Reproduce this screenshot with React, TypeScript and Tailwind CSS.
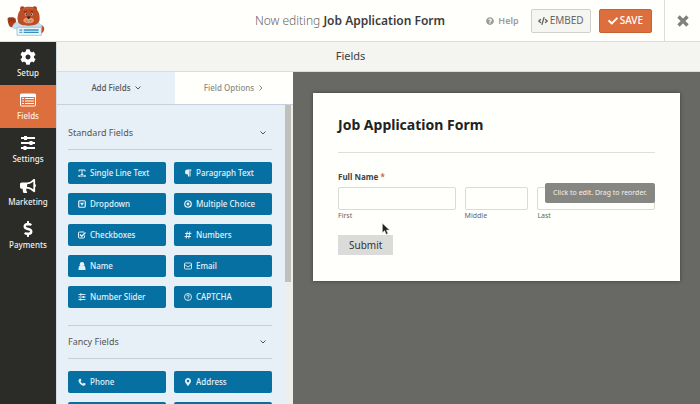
import type { ReactNode } from 'react';
import type { IconType } from 'react-icons';
import {
  FaBullhorn,
  FaCheck,
  FaCode,
  FaCog,
  FaDollarSign,
  FaHashtag,
  FaMapMarkerAlt,
  FaParagraph,
  FaQuestionCircle,
} from 'react-icons/fa';

type Field = { label: string; icon: IconType };

const standardFields: Field[] = [
  { label: 'Single Line Text', icon: TextCursorIcon },
  { label: 'Paragraph Text', icon: FaParagraph },
  { label: 'Dropdown', icon: DropdownIcon },
  { label: 'Multiple Choice', icon: RadioIcon },
  { label: 'Checkboxes', icon: CheckboxIcon },
  { label: 'Numbers', icon: FaHashtag },
  { label: 'Name', icon: PersonIcon },
  { label: 'Email', icon: EnvelopeIcon },
  { label: 'Number Slider', icon: SlidersIcon },
  { label: 'CAPTCHA', icon: QuestionIcon },
];

const fancyFields: Field[] = [
  { label: 'Phone', icon: PhoneIcon },
  { label: 'Address', icon: FaMapMarkerAlt },
];

const navItems: Field[] = [
  { label: 'Setup', icon: FaCog },
  { label: 'Fields', icon: ListIcon },
  { label: 'Settings', icon: SlidersIcon },
  { label: 'Marketing', icon: FaBullhorn },
  { label: 'Payments', icon: FaDollarSign },
];

export default function App() {
  return (
    <div className="flex h-screen flex-col overflow-hidden bg-[#fffffc] font-['Noto_Sans',sans-serif] text-[#3f3f3f]">
      <Header />
      <div className="flex min-h-0 flex-1">
        <nav className="w-14 shrink-0 bg-[#2b2b27]">
          {navItems.map(({ label, icon: Icon }) => (
            <a
              key={label}
              href="#"
              className={
                label === 'Fields'
                  ? 'flex h-[43px] flex-col items-center justify-center gap-0.5 bg-[#dd6e3d] text-[8px] leading-3 font-medium text-[#fdeee6]'
                  : 'flex h-[43px] flex-col items-center justify-center gap-0.5 text-[8px] leading-3 font-medium text-[#f0f0ec]'
              }
            >
              <Icon size={16} className="text-white" />
              {label}
            </a>
          ))}
        </nav>
        <div className="flex min-w-0 flex-1 flex-col border-l border-[#d3dbe2]">
          <div className="flex h-[30px] shrink-0 items-center justify-center border-b border-[#dcddd9] bg-[#f4f4f1] pr-14 text-[11px]">
            Fields
          </div>
          <div className="flex min-h-0 flex-1">
            <FieldsPanel />
            <main className="min-w-0 flex-1 bg-[#686964] px-5 py-[21px]">
              <Preview />
            </main>
          </div>
        </div>
      </div>
    </div>
  );
}

function Header() {
  return (
    <header className="grid h-[42px] shrink-0 grid-cols-[1fr_auto_1fr] items-center border-b border-[#dcddd9]">
      <Logo />
      <p className="text-xs font-light text-[#666]">
        Now editing <strong className="font-semibold text-[#3b3b3b]">Job Application Form</strong>
      </p>
      <div className="flex h-full items-center justify-end">
        <a href="#" className="mr-3 flex items-center gap-1 text-[9px] font-semibold text-[#9b9b99]">
          <FaQuestionCircle size={8} />
          Help
        </a>
        <button className="mr-2 flex h-6 items-center gap-0.5 rounded-xs border border-[#d0d1cf] bg-[#f5f5f2] px-1.5 text-[10px] text-[#666]">
          <FaCode size={10} />
          EMBED
        </button>
        <button className="flex h-6 items-center gap-0.5 rounded-xs border border-[#c9602f] bg-[#dd6e3d] px-2 text-[10px] font-medium text-white">
          <FaCheck size={10} />
          SAVE
        </button>
        <button aria-label="Close" className="ml-3 flex h-full w-9 items-center justify-center border-l border-[#dcddd9] text-[#80807d]">
          <svg width="12" height="12" viewBox="0 0 12 12" fill="none" stroke="currentColor" strokeWidth="3.4">
            <path d="M1.5 1.5 10.5 10.5M10.5 1.5 1.5 10.5" />
          </svg>
        </button>
      </div>
    </header>
  );
}

function FieldsPanel() {
  return (
    <aside className="flex w-[236px] shrink-0 flex-col bg-[#e8f0f7]">
      <div className="grid h-[33px] shrink-0 grid-cols-2 border-b border-[#c5d1dc] text-[8px]">
        <button className="flex items-center justify-center gap-1 font-medium text-[#555]">
          Add Fields
          <Chevron />
        </button>
        <button className="flex items-center justify-center gap-1 bg-[#fffffc] font-medium text-[#8b8b89]">
          Field Options
          <span className="-rotate-90">
            <Chevron />
          </span>
        </button>
      </div>
      <div className="flex min-h-0 flex-1">
        <div className="min-w-0 flex-1 overflow-hidden pr-[13px] pl-[11px]">
          <FieldGroup title="Standard Fields" fields={standardFields}>
            <div className="h-3" />
          </FieldGroup>
          <FieldGroup title="Fancy Fields" fields={fancyFields}>
            <div className="mt-[17px] border-t border-[#c5d1d9]" />
          </FieldGroup>
          <div className="mt-[9px] grid grid-cols-2 gap-x-2">
            <div className="h-[22px] rounded-xs bg-[#0770a3]" />
            <div className="h-[22px] rounded-xs bg-[#0770a3]" />
          </div>
        </div>
        <div className="w-2 bg-[#eeeeeb] pr-0.5">
          <div className="h-[177px] bg-[#bfbfbc]" />
        </div>
      </div>
    </aside>
  );
}

function FieldGroup({ title, fields, children }: { title: string; fields: Field[]; children: ReactNode }) {
  return (
    <section>
      {children}
      <h2>
        <button className="flex h-[33px] w-full items-center justify-between border-b border-[#c5d1d9] pr-1.5 text-[9px] text-[#555]">
          {title}
          <Chevron />
        </button>
      </h2>
      <div className="mt-3 grid grid-cols-2 gap-x-2 gap-y-[9px]">
        {fields.map(({ label, icon: Icon }) => (
          <button
            key={label}
            className="flex h-[22px] items-center gap-1 rounded-xs bg-[#0770a3] pl-2.5 text-[8px] font-medium text-[#e3f2f8]"
          >
            <Icon size={8} />
            {label}
          </button>
        ))}
      </div>
    </section>
  );
}

function Preview() {
  return (
    <form className="bg-[#fffffc] px-[25px] pt-5 pb-[26px] shadow-[0_0_4px_rgba(0,0,0,0.4)]">
      <h1 className="border-b border-[#dededa] pb-[15px] text-sm leading-6 font-bold text-[#222]">Job Application Form</h1>
      <fieldset className="mt-4">
        <legend className="text-[8px] leading-4 font-bold text-[#444]">
          Full Name <span className="text-[#d4623f]">*</span>
        </legend>
        <div className="relative mt-0.5 grid grid-cols-[118fr_64fr_118fr] gap-[9px]">
          <NameInput label="First" />
          <NameInput label="Middle" />
          <NameInput label="Last" />
          <div role="tooltip" className="absolute -top-1 right-0 rounded-xs bg-[#868682] px-2 text-[7px] leading-5 text-[#f2f2ef]">
            Click to edit. Drag to reorder.
          </div>
          <svg className="absolute top-9 left-11 h-3 w-2" viewBox="0 0 8 12">
            <path d="M.5.5v9l2.2-2 1.500 3.700 1.600-.7-1.500-3.500h3z" fill="#222" stroke="#bbb" strokeWidth=".5" />
          </svg>
        </div>
      </fieldset>
      <button type="button" className="mt-[13px] h-5 bg-[#dbdbd9] px-[11px] text-[10px] text-[#333]">
        Submit
      </button>
    </form>
  );
}

function NameInput({ label }: { label: string }) {
  return (
    <label className="flex min-w-0 flex-col text-[7px] leading-3 text-[#666]">
      <input type="text" className="h-[23px] w-full rounded-xs border border-[#d9dad6] bg-[#fffffc] px-1" />
      {label}
    </label>
  );
}

type IconProps = { size?: string | number; className?: string };

function Chevron() {
  return (
    <svg width="6" height="4" viewBox="0 0 6 4" fill="none" stroke="currentColor">
      <path d="M.5.5 3 3 5.5.5" />
    </svg>
  );
}

function TextCursorIcon({ size = 8 }: IconProps) {
  return (
    <svg width={size} height={size} viewBox="0 0 16 16" fill="none" stroke="currentColor" strokeWidth="2">
      <path d="M2 5V2h12v3M8 2v9M5.500 11h5M1 14h14M3 12l-2 2 2 2M13 12l2 2-2 2" />
    </svg>
  );
}

function DropdownIcon({ size = 8 }: IconProps) {
  return (
    <svg width={size} height={size} viewBox="0 0 16 16" fill="none" stroke="currentColor" strokeWidth="2.400">
      <rect x="1.500" y="1.500" width="13" height="13" rx="2" />
      <path d="M4 5.500h8L8 11.500z" fill="currentColor" stroke="none" />
    </svg>
  );
}

function RadioIcon({ size = 8 }: IconProps) {
  return (
    <svg width={size} height={size} viewBox="0 0 16 16" fill="none" stroke="currentColor" strokeWidth="2.4">
      <circle cx="8" cy="8" r="6.500" />
      <circle cx="8" cy="8" r="2.800" fill="currentColor" stroke="none" />
    </svg>
  );
}

function CheckboxIcon({ size = 8 }: IconProps) {
  return (
    <svg width={size} height={size} viewBox="0 0 16 16" fill="none" stroke="currentColor" strokeWidth="2">
      <path d="M12 2H3Q1 2 1 4v8q0 2 2 2h8q2 0 2-2V9" />
      <path d="M4 7l3.500 3.500L15 3" strokeWidth="2.800" />
    </svg>
  );
}

function EnvelopeIcon({ size = 8 }: IconProps) {
  return (
    <svg width={size} height={size} viewBox="0 0 16 16" fill="none" stroke="currentColor" strokeWidth="1.800">
      <rect x="1" y="2" width="14" height="12" rx="1.500" />
      <path d="M1 5l7 5 7-5" />
    </svg>
  );
}

function QuestionIcon({ size = 8 }: IconProps) {
  return (
    <svg width={size} height={size} viewBox="0 0 16 16" fill="none" stroke="currentColor" strokeWidth="1.800">
      <circle cx="8" cy="8" r="7" />
      <path d="M5.500 6.500q0-2.500 2.500-2.500t2.500 2.200Q10.500 7.500 8 8.500v1M8 11v2" />
    </svg>
  );
}

function PersonIcon({ size = 8 }: IconProps) {
  return (
    <svg width={size} height={size} viewBox="0 0 16 16" fill="currentColor">
      <circle cx="8" cy="4.500" r="4.500" />
      <path d="M4 7c2 2 6 2 8 0 2 1 3 4 3 9H1c0-5 1-8 3-9z" />
    </svg>
  );
}

function PhoneIcon({ size = 8 }: IconProps) {
  return (
    <svg width={size} height={size} viewBox="0 0 16 16" fill="currentColor">
      <path d="M2 2.500 5 1l2 4-2 2q1.500 3 4.500 4.500l2-2 4 2-1.500 3q-2 1.500-5 .5Q3 12.500 1.200 7 .8 4 2 2.500z" />
    </svg>
  );
}

function ListIcon({ size = 16, className }: IconProps) {
  return (
    <svg width={size} height={size} viewBox="0 0 16 16" className={className} fill="none" stroke="currentColor">
      <rect x=".5" y="2" width="15" height="12" rx="1" />
      <path d="M0 3.500h16" strokeWidth="3" />
      <path d="M2 6.500h2M2 9h2M2 11.500h2M5 6.500h9M5 9h9M5 11.500h9" />
    </svg>
  );
}

function SlidersIcon({ size = 16, className }: IconProps) {
  return (
    <svg width={size} height={size} viewBox="0 0 16 16" className={className} fill="none" stroke="currentColor">
      <path d="M1 3h14M1 8h14M1 13h14" strokeWidth="1.800" />
      <path d="M5.500 1v4M11 6v4M5 11v4" strokeWidth="3" />
    </svg>
  );
}

function Logo() {
  return (
    <svg className="ml-[7px] h-[31px] w-10" viewBox="20 13 120 93" role="img" aria-label="WPForms">
      <circle cx="66" cy="24" r="7" fill="#a3401f" />
      <circle cx="103" cy="24" r="7" fill="#a3401f" />
      <path d="M22 58c-2-9 6-8 11-8 8-1 14 1 14 10 0 10-4 19-12 20-9 0-12-12-13-22z" fill="#a8401f" />
      <path d="M28 54v10M34 52v11M40 54v9" stroke="#6f2e20" strokeWidth="2" />
      <path d="M118 74c10-2 16 6 13 15-2 7-7 10-12 8z" fill="#c14f26" />
      <path d="M36 78c5-14 14-15 20-14l58 2c8 3 10 8 11 14l-8 20H54l-6-17c-5 3-9 0-12-5z" fill="#c5dff0" stroke="#84aac2" strokeWidth="1" />
      <path d="M52 58c-1-13 2-40 33-40s34 25 33 38c-1 14-13 19-33 19S53 71 52 58z" fill="#bd4d25" />
      <path d="M65 28c10-10 30-10 39 0-12-5-27-5-39 0z" fill="#d0612f" />
      <ellipse cx="85" cy="59" rx="16" ry="9" fill="#e39a6f" />
      <path d="M79 49q6-4 12 0-1 5-6 6-5-1-6-6z" fill="#46201b" />
      <path d="M77 61q8 4 16-1-4 6-8 6t-8-5z" fill="#fff" stroke="#6b2c1c" strokeWidth="1" />
      <circle cx="77" cy="41" r="3.500" fill="#ead9cb" />
      <circle cx="94" cy="41" r="3.500" fill="#ead9cb" />
      <circle cx="78" cy="41" r="2.500" fill="#302323" />
      <circle cx="93" cy="41" r="2.500" fill="#302323" />
      <path d="M71 34l8-2M91 32l8 2" stroke="#67301f" strokeWidth="3" />
      <path d="M50 80h73v24H50z" fill="#edf6fa" stroke="#8ab2c8" strokeWidth="2" />
      <path d="M57 88h9M57 95h9" stroke="#59a8d0" strokeWidth="4" />
      <path d="M70 88h45M70 95h45" stroke="#368fc0" strokeWidth="4" />
    </svg>
  );
}
